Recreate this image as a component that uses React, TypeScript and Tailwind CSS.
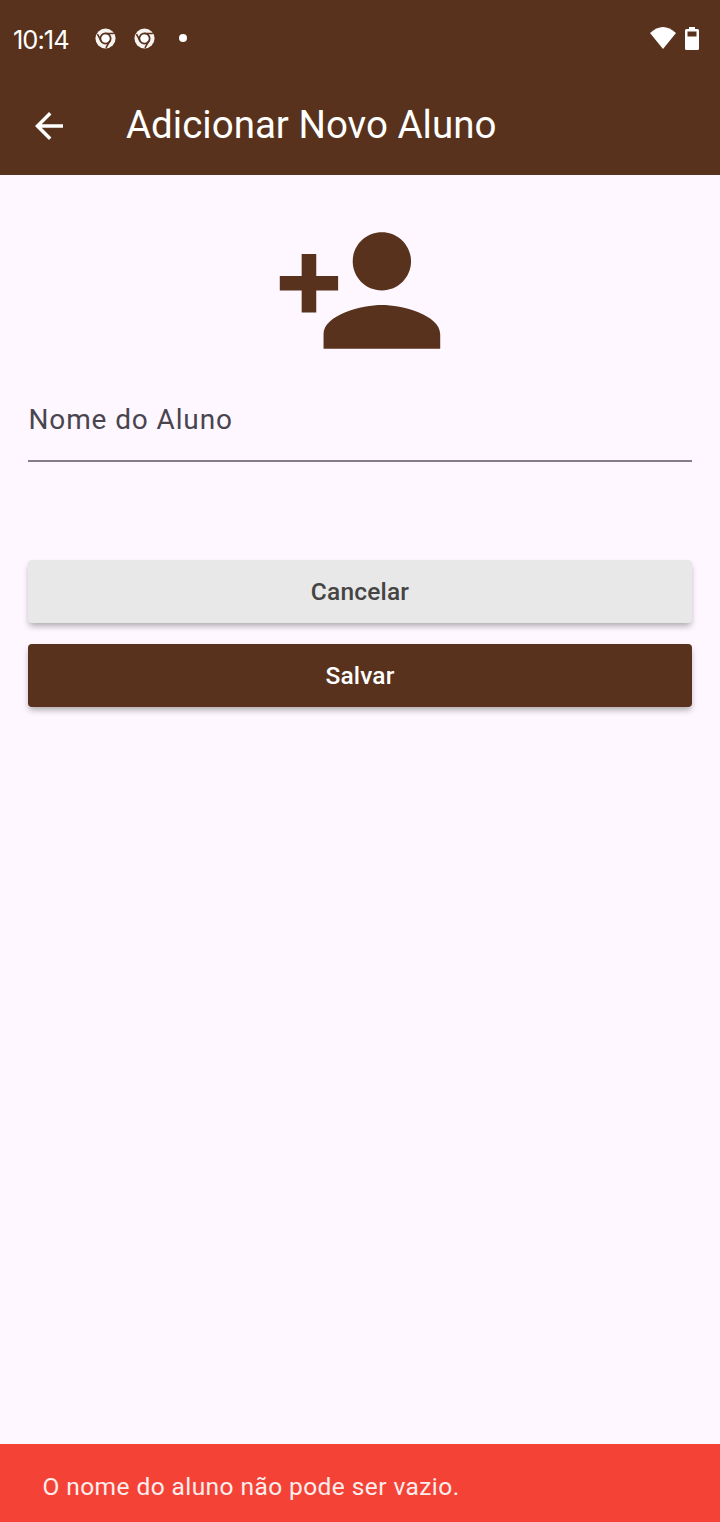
import React from "react";

function Chrome() {
  return (
    <svg viewBox="0 0 24 24" className="h-[21px] w-[21px]">
      <circle cx="12" cy="12" r="11.5" fill="#f7f3f1" />
      <circle cx="12" cy="12" r="5.900" fill="#fff" stroke="#58321c" strokeWidth="2" />
      <path d="M12 6.200H21.500M6.900 14.800L2.800 7M17 14.800L12.500 22.600" stroke="#58321c" strokeWidth="1.8" />
    </svg>
  );
}

export default function App() {
  return (
    <div className="flex h-[1522px] w-[720px] flex-col bg-[#fef7ff] font-[Roboto,sans-serif]">
      <header className="h-[175px] bg-[#58321c] text-white">
        <div className="flex h-[76px] items-center pl-[13px] pr-[21px]">
          <span className="flex w-[82px] items-baseline pt-[3px] font-[Inter,sans-serif] text-[25.500px] leading-none tracking-[-1px]">10:14</span>
          <Chrome />
          <span className="w-[18px]" />
          <Chrome />
          <span className="ml-[24px] h-2 w-2 rounded-full bg-white" />
          <svg viewBox="0 0 26 22" className="ml-auto h-[22px] w-[26px]">
            <path d="M13 22L0 6Q13-6 26 6Z" fill="white" />
          </svg>
          <svg viewBox="0 0 14 23" className="ml-[9px] h-[23px] w-[14px]">
            <path fillRule="evenodd" d="M4 0h6v2h2.500Q14 2 14 3.500v18Q14 23 12.500 23h-11Q0 23 0 21.500v-18Q0 2 1.500 2H4ZM2.500 4.500v5h9v-5Z" fill="white" />
          </svg>
        </div>
        <div className="flex h-[99px] items-center pl-[28px]">
          <svg viewBox="0 0 24 24" className="h-[42px] w-[42px]">
            <path d="M20 11H7.830l5.590-5.590L12 4l-8 8 8 8 1.410-1.410L7.830 13H20z" fill="white" />
          </svg>
          <h1 className="ml-[56px] pb-px text-[38.500px] leading-none">Adicionar Novo Aluno</h1>
        </div>
      </header>
      <main className="flex flex-1 flex-col px-[28px] pt-[28px]">
        <svg viewBox="0 0 24 24" className="h-[175px] w-[176px] self-center">
          <path d="M15 12c2.210 0 4-1.790 4-4s-1.790-4-4-4-4 1.790-4 4 1.790 4 4 4zM6 10V7H4v3H1v2h3v3h2v-3h3v-2zm9 4c-2.670 0-8 1.340-8 4v2h16v-2c0-2.660-5.330-4-8-4z" fill="#58321c" />
        </svg>
        <label className="flex h-[84px] items-center border-b-2 border-[#837e87] pl-[0.500px] pt-[2px] text-[28px] tracking-[0.875px] text-[#49454f]">Nome do Aluno</label>
        <button className="mt-[98px] h-[63px] rounded-[4px] bg-[#e8e8e8] pt-[2px] text-[24.500px] font-medium tracking-[0.175px] text-[#444] shadow-[0_4px_6px_-1px_rgba(0,0,0,0.32)]">Cancelar</button>
        <button className="mt-[21px] h-[63px] rounded-[4px] bg-[#58321c] pt-[2px] text-[24.500px] font-medium tracking-[0.175px] text-white shadow-[0_4px_6px_-1px_rgba(0,0,0,0.32)]">Salvar</button>
      </main>
      <footer className="flex h-[78px] items-center bg-[#f44336] pl-[42.500px] pt-[8px] text-[24.500px] tracking-[0.420px] text-[#fceeee]">O nome do aluno não pode ser vazio.</footer>
    </div>
  );
}
